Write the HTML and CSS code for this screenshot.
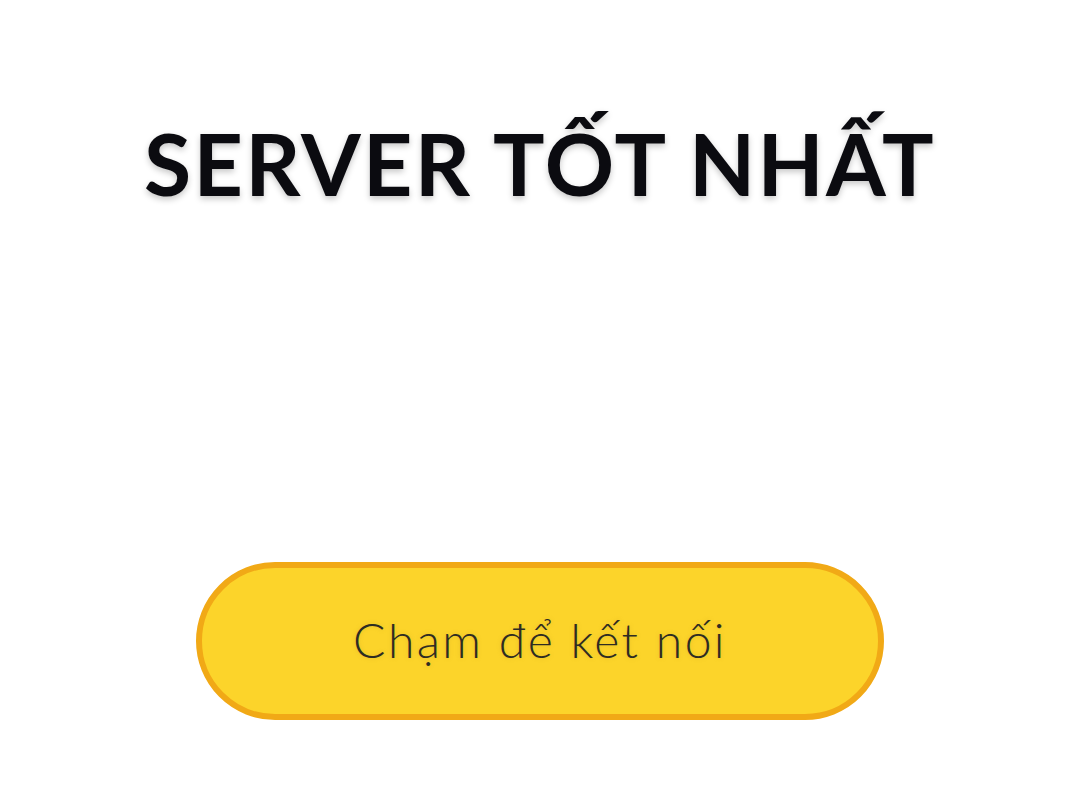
FILE: index.html
```html
<!DOCTYPE html>
<html lang="vi">
<head>
<meta charset="utf-8">
<link rel="stylesheet" href="styles.css">
</head>
<body>
<main class="screen">
  <h1 class="title">SERVER TỐT NHẤT</h1>
  <button class="connect">Chạm để kết nối</button>
</main>
</body>
</html>
```
FILE: styles.css
```css
html, body {
  margin: 0;
  padding: 0;
  background: #ffffff;
}
.screen {
  width: 1080px;
  height: 793px;
  display: flex;
  flex-direction: column;
  align-items: center;
}
.title {
  margin: 108px 0 0 0;
  font-family: "Lato", "Noto Sans", sans-serif;
  font-weight: 700;
  font-size: 86px;
  line-height: 110px;
  letter-spacing: 2.3px;
  color: #0b0b10;
  text-shadow: 0 3px 6px rgba(0, 0, 0, 0.22);
}
.connect {
  margin-top: 344px;
  box-sizing: border-box;
  width: 688px;
  height: 158px;
  border: 6px solid #f1a916;
  border-radius: 80px;
  background: #fcd42a;
  font-family: "Lato", "Noto Sans", sans-serif;
  font-weight: 300;
  font-size: 48px;
  color: #2e2c22;
  letter-spacing: 2.4px;
  padding: 0 0 4px 0;
  text-shadow: 0 0 4px rgba(180, 150, 40, 0.35);
}
```
